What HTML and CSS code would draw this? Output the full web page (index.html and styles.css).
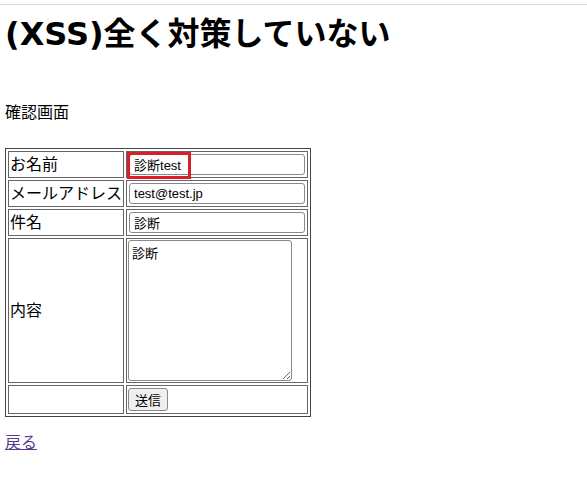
FILE: index.html
```html
<!DOCTYPE html>
<html lang="ja">
<head>
    <meta charset="UTF-8">
    <title>確認画面</title>
    <link rel="stylesheet" href="styles.css">
</head>
<body>
    <div class="topline"></div>
    <div class="page">
        <h1>(XSS)全く対策していない</h1>
        <p class="lead">確認画面</p>

        <form class="confirm" action="#" method="post">
            <table class="form-table">
                <tr>
                    <td class="label">お名前</td>
                    <td class="field name-field">
                        <input type="text" class="text-input" value="診断test">
                        <span class="mark"></span>
                    </td>
                </tr>
                <tr>
                    <td class="label">メールアドレス</td>
                    <td class="field"><input type="text" class="text-input" value="test@test.jp"></td>
                </tr>
                <tr>
                    <td class="label">件名</td>
                    <td class="field"><input type="text" class="text-input" value="診断"></td>
                </tr>
                <tr>
                    <td class="label">内容</td>
                    <td class="field"><textarea class="body-input">診断</textarea></td>
                </tr>
                <tr>
                    <td class="label"></td>
                    <td class="field"><button type="submit" class="send">送信</button></td>
                </tr>
            </table>
        </form>

        <p class="back"><a href="#">戻る</a></p>
    </div>
</body>
</html>
```

FILE: styles.css
```css
body {
    margin: 0;
    font-family: "Liberation Sans", "Noto Sans CJK JP", sans-serif;
    font-size: 16px;
    color: #000;
    background: #fff;
}

.topline {
    margin-top: 4px;
    border-top: 1px solid #dcdcdc;
}

.page {
    padding: 0 5px;
}

h1 {
    font-family: "DejaVu Sans", "Noto Sans CJK JP", sans-serif;
    font-size: 32px;
    font-weight: bold;
    line-height: 38px;
    margin: 10px 0 0;
}

.lead {
    margin: 48px 0 0;
    line-height: 24px;
}

.confirm {
    margin-top: 23px;
}

.form-table {
    border: 1px solid #444;
    border-spacing: 2px;
}

.form-table td {
    border: 1px solid #666;
    padding: 0 1px;
    line-height: 25px;
}

.label {
    white-space: nowrap;
}

.field {
    position: relative;
    width: 178px;
}

.text-input {
    box-sizing: border-box;
    width: 176px;
    height: 21px;
    margin: 2px 0 0 1px;
    padding: 0 4px;
    border: 1px solid #8a8a8a;
    border-radius: 3px;
    font-family: "Liberation Sans", "Noto Sans CJK JP", sans-serif;
    font-size: 13px;
    vertical-align: top;
}

.body-input {
    box-sizing: border-box;
    display: block;
    width: 164px;
    height: 141px;
    margin: 1px 0;
    padding: 2px 3px;
    border: 1px solid #8a8a8a;
    border-radius: 3px;
    font-family: "Liberation Sans", "Noto Sans CJK JP", sans-serif;
    font-size: 13px;
    resize: both;
}

.send {
    box-sizing: border-box;
    height: 23px;
    margin: 2px 0;
    padding: 0 6px;
    border: 1px solid #8a8a8a;
    border-radius: 3px;
    background: #efefef;
    font-family: "Liberation Sans", "Noto Sans CJK JP", sans-serif;
    font-size: 13px;
    vertical-align: top;
}

/* red highlight frame over the submitted name */
.mark {
    position: absolute;
    left: 0;
    top: 0;
    width: 58px;
    height: 21px;
    border: 3px solid #d9202a;
    pointer-events: none;
}

.back {
    margin: 15px 0 0;
    line-height: 22px;
}

.back a {
    color: #5a3c8c;
}
```
